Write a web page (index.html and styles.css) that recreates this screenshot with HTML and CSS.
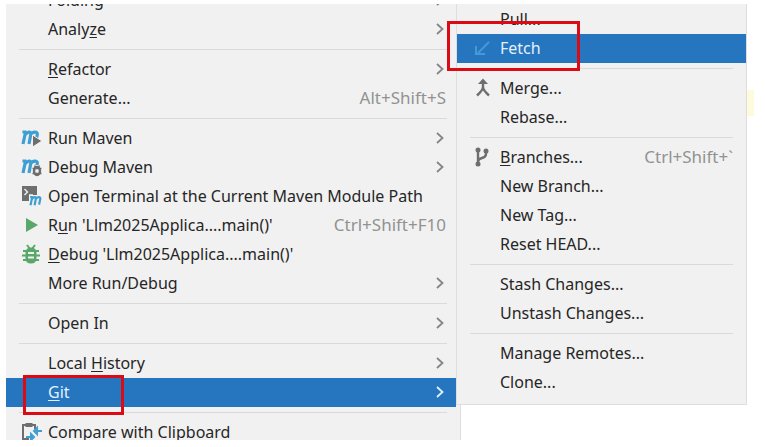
FILE: index.html
```html
<!DOCTYPE html>
<html lang="en">
<head>
<meta charset="utf-8">
<title>Context menu</title>
<link rel="stylesheet" href="styles.css">
</head>
<body>
<svg class="defs" aria-hidden="true">
  <symbol id="chevron" viewBox="0 0 10 14"><path d="M2 2l5.500 5L2 12" fill="none" stroke="currentColor" stroke-width="1.800"/></symbol>
  <symbol id="m" viewBox="0 0 20 16"><path d="M2 15L4.800 2M4 6C6 2.500 10.500 2 9.800 5L8 15M9.500 6C11.500 2.500 17 2 16.300 5.500L14.500 14M1.500 3h4" fill="none" stroke="#3f9fd3" stroke-width="3.200"/></symbol>
  <symbol id="bug" viewBox="0 0 18 20"><path d="M5 1l3 4M13 1l-3 4M1 7h16M0 11.500h18M1 16h16" fill="none" stroke="currentColor" stroke-width="2"/><path d="M3.500 9Q3.500 3.500 9 3.500T14.500 9v5Q14.500 19.500 9 19.500T3.500 14z" fill="currentColor"/><path d="M6 9h6M6 13.500h6" stroke="#f1f1f1" stroke-width="1.800"/></symbol>
</svg>
<main class="stage">
  <ul class="menu menu-main">
    <li><button class="item"><span class="icon"></span><span class="label">Folding</span><svg class="chevron"><use href="#chevron"/></svg></button></li>
    <li><button class="item"><span class="icon"></span><span class="label">Analy<u>z</u>e</span><svg class="chevron"><use href="#chevron"/></svg></button></li>
    <li class="sep"></li>
    <li><button class="item"><span class="icon"></span><span class="label"><u>R</u>efactor</span><svg class="chevron"><use href="#chevron"/></svg></button></li>
    <li><button class="item"><span class="icon"></span><span class="label">Generate...</span><kbd>Alt+Shift+S</kbd></button></li>
    <li class="sep"></li>
    <li><button class="item"><svg class="icon" viewBox="0 0 22 20"><use href="#m" x="0" y="1" width="20" height="16"/><path d="M11.500 7v12L21 13z" fill="#6e6e6e" stroke="#f1f1f1"/></svg><span class="label">Run Maven</span><svg class="chevron"><use href="#chevron"/></svg></button></li>
    <li><button class="item"><svg class="icon" viewBox="0 0 22 20"><use href="#m" x="0" y="1" width="20" height="16"/><ellipse cx="16" cy="14" rx="5" ry="6" fill="#f1f1f1"/><ellipse cx="16" cy="14" rx="3" ry="4" fill="none" stroke="#6e6e6e" stroke-width="2.400"/><path d="M11.500 11.500h9M11.500 16.500h9M13.500 8.500l1 2M18.500 8.500l-1 2" stroke="#6e6e6e" stroke-width="1.400"/></svg><span class="label">Debug Maven</span><svg class="chevron"><use href="#chevron"/></svg></button></li>
    <li><button class="item"><svg class="icon" viewBox="0 0 22 20"><path d="M1 0h15v9H8v6H1z" fill="#6e6e6e"/><path d="M3.500 3l3 3-3 3M8 9h4" fill="none" stroke="#f1f1f1" stroke-width="1.400"/><use href="#m" x="8" y="9" width="14" height="11"/></svg><span class="label">Open Terminal at the Current Maven Module Path</span></button></li>
    <li><button class="item"><svg class="icon" viewBox="0 0 22 20"><path d="M5 3v14l12-7z" fill="#59a869"/></svg><span class="label">R<u>u</u>n 'Llm2025Applica....main()'</span><kbd>Ctrl+Shift+F10</kbd></button></li>
    <li><button class="item"><svg class="icon" viewBox="0 0 22 20"><use class="green" href="#bug" x="1" y="0" width="18" height="20"/></svg><span class="label"><u>D</u>ebug 'Llm2025Applica....main()'</span></button></li>
    <li><button class="item"><span class="icon"></span><span class="label">More Run/Debug</span><svg class="chevron"><use href="#chevron"/></svg></button></li>
    <li class="sep"></li>
    <li><button class="item"><span class="icon"></span><span class="label">Open In</span><svg class="chevron"><use href="#chevron"/></svg></button></li>
    <li class="sep"></li>
    <li><button class="item"><span class="icon"></span><span class="label">Local <u>H</u>istory</span><svg class="chevron"><use href="#chevron"/></svg></button></li>
    <li class="row"><button class="item selected"><span class="icon"></span><span class="label"><u>G</u>it</span><svg class="chevron"><use href="#chevron"/></svg></button><span class="mark mark-git"></span></li>
    <li class="sep"></li>
    <li><button class="item"><svg class="icon" viewBox="0 0 22 20"><path d="M8 17H2V3h12v4" fill="none" stroke="#6e6e6e" stroke-width="2"/><path d="M4.500 1h7v4h-7z" fill="#6e6e6e"/><path d="M21 9h-7M16 6l-3 3 3 3zM5 15h7M10 12l3 3-3 3z" fill="#3f9fd3" stroke="#3f9fd3" stroke-width="2"/></svg><span class="label">Compare with Clip<u>b</u>oard</span></button></li>
  </ul>
  <ul class="menu menu-sub">
    <li><button class="item"><span class="icon"></span><span class="label">Pull...</span></button></li>
    <li class="row"><button class="item selected"><svg class="icon" viewBox="0 0 22 20"><path d="M17 4L6 15M4 8v8h9" fill="none" stroke="#429bd8" stroke-width="2"/></svg><span class="label">Fetch</span></button><span class="mark mark-fetch"></span></li>
    <li class="sep"></li>
    <li><button class="item"><svg class="icon" viewBox="0 0 22 20"><path d="M11 4v5Q11 12 5 17.500M11 9q0 3 6 8.500" fill="none" stroke="#6e6e6e" stroke-width="2.400"/><path d="M6 6l5-5.500L16 6z" fill="#6e6e6e"/></svg><span class="label">Merge...</span></button></li>
    <li><button class="item"><span class="icon"></span><span class="label">Rebase...</span></button></li>
    <li class="sep"></li>
    <li><button class="item"><svg class="icon" viewBox="0 0 22 20"><path d="M6 3v14M14 4v3q0 3-4 4T6 15" fill="none" stroke="#6e6e6e" stroke-width="2.400"/><g fill="#6e6e6e"><circle cx="6" cy="3" r="2.500"/><circle cx="14" cy="4" r="2.500"/><circle cx="6" cy="17" r="2.500"/></g></svg><span class="label"><u>B</u>ranches...</span><kbd>Ctrl+Shift+`</kbd></button></li>
    <li><button class="item"><span class="icon"></span><span class="label">New Branch...</span></button></li>
    <li><button class="item"><span class="icon"></span><span class="label">New Tag...</span></button></li>
    <li><button class="item"><span class="icon"></span><span class="label">Reset HEAD...</span></button></li>
    <li class="sep"></li>
    <li><button class="item"><span class="icon"></span><span class="label">Stash Changes...</span></button></li>
    <li><button class="item"><span class="icon"></span><span class="label">Unstash Changes...</span></button></li>
    <li class="sep"></li>
    <li><button class="item"><span class="icon"></span><span class="label">Manage Remotes...</span></button></li>
    <li><button class="item"><span class="icon"></span><span class="label">Clone...</span></button></li>
  </ul>
  <span class="glow"></span>
</main>
</body>
</html>
```
FILE: styles.css
```css
* { box-sizing: border-box; }

body {
  margin: 0;
  height: 100vh;
  padding: 4px 11px 7px 6px;
  overflow: hidden;
  background: #fff;
  color: #262626;
  font: 16px/20px "Noto Sans", "Open Sans", sans-serif;
}

.defs { position: absolute; width: 0; height: 0; }

.stage {
  position: relative;
  display: grid;
  grid-template-columns: 450fr 291fr;
  align-items: start;
  height: 100%;
  padding-right: 7px;
  overflow: hidden;
}

.menu {
  margin: 0;
  list-style: none;
  background: #f1f1f1;
}

.menu-main {
  margin: -18px -5px 0 0;
  padding: 0 4px 0 0;
  border-right: 1px solid #dedede;
}

.menu-sub {
  position: relative;
  padding: 1px 0 7px;
  border: 1px solid #dedede;
  border-top: 0;
}

.row { position: relative; }

.item {
  display: flex;
  align-items: center;
  width: 100%;
  height: 29px;
  padding: 0 10px 2px 15px;
  border: 0;
  background: none;
  color: inherit;
  font: inherit;
  text-align: left;
  white-space: nowrap;
}

.menu-sub .item { padding: 0 13px 2px 15px; }

.item.selected { background: #2675bf; color: #e4f0fb; }

.icon { flex: none; width: 22px; height: 20px; margin-right: 5px; }
.menu-sub .icon { margin-right: 6px; }

.label { flex: 1; }

u { text-underline-offset: 2px; text-decoration-thickness: 1px; }

kbd { color: #929292; font: inherit; font-size: 17px; }

.chevron { width: 10px; height: 14px; margin-right: 1px; color: #858585; }
.selected .chevron { color: #e4f0fb; }

.green { color: #59a869; }

.sep { height: 11px; padding: 5px 9px 0 13px; }
.sep::before { content: ""; display: block; height: 1px; background: #dadada; }
.menu-sub .sep { padding: 5px 13px 0; }

.mark { position: absolute; border: 3px solid #dc0a14; pointer-events: none; }
.mark-git { top: -3px; left: 17px; width: 101px; height: 40px; }
.mark-fetch { top: -13px; left: -10px; width: 133px; height: 50px; }

.glow {
  position: absolute;
  top: 86px;
  right: 0;
  width: 7px;
  height: 26px;
  background: #fdfbdc;
}
```
